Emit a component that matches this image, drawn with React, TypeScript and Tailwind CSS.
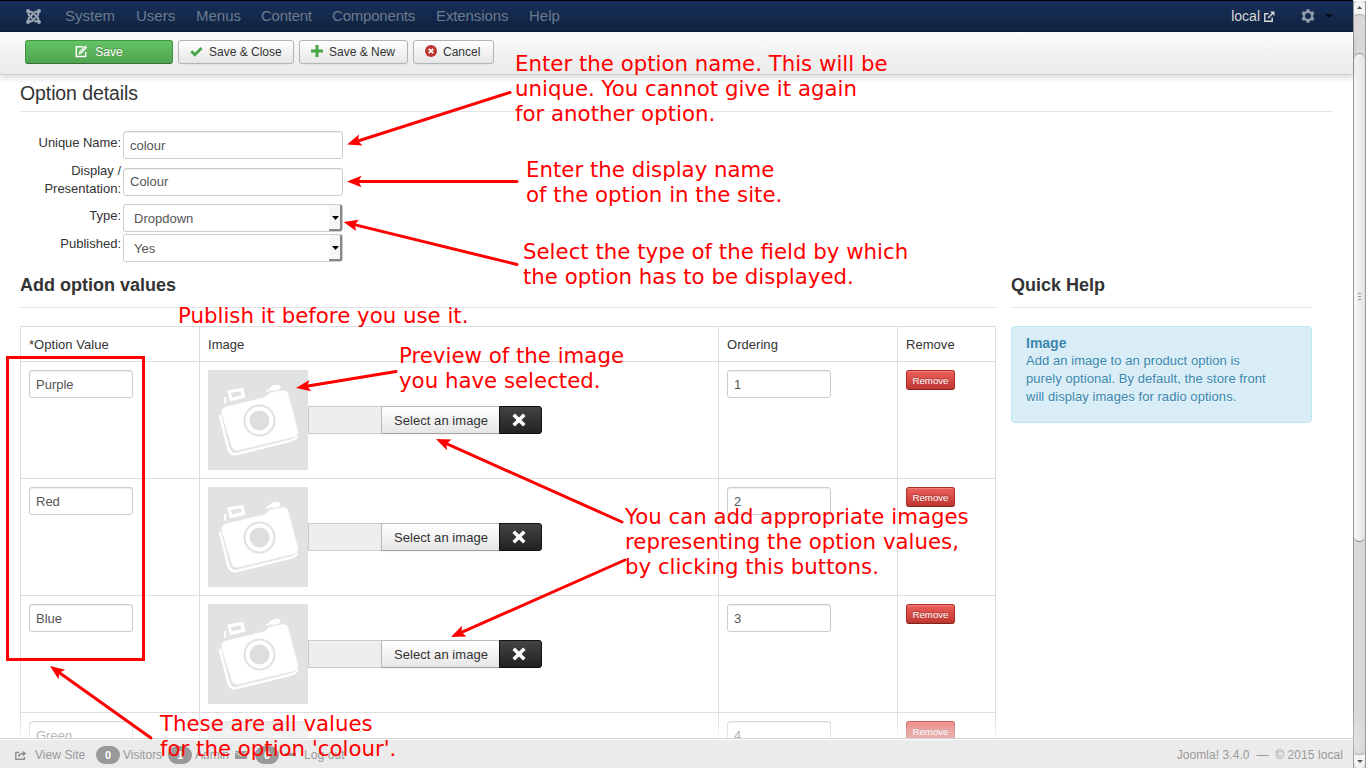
import type { ReactNode } from 'react';
import { FaJoomla } from 'react-icons/fa';

const MENU = [
  { label: 'System', className: 'w-[71px]' },
  { label: 'Users', className: 'w-[60px]' },
  { label: 'Menus', className: 'w-[65px]' },
  { label: 'Content', className: 'w-[71px] tracking-[-0.25px]' },
  { label: 'Components', className: 'w-[104px] tracking-[-0.2px]' },
  { label: 'Extensions', className: 'w-[93px] tracking-[-0.1px]' },
  { label: 'Help', className: 'w-[40px]' },
];

function EditIcon() {
  return (
    <svg className="-mt-px" width="13" height="13" viewBox="0 0 13 13" fill="none" stroke="currentColor">
      <path d="M8 1.800H1.300v9.600h9.400V7" strokeWidth="1.500" />
      <path d="M3.600 9.400l.6-3L10 .6l2.200 2-5.900 6.200z" fill="currentColor" stroke="none" />
      <path d="M4.900 7.700l5-5" stroke="#5ab85a" strokeWidth="0.700" />
    </svg>
  );
}

function CheckIcon() {
  return (
    <svg className="-mt-px" width="13" height="12" viewBox="0 0 13 12" fill="none" stroke="#46a546" strokeWidth="2.700">
      <path d="M1.300 5.200l3.500 3.600L11.600 2" />
    </svg>
  );
}

function PlusIcon() {
  return (
    <svg className="-mt-0.5" width="12" height="12" viewBox="0 0 12 12" fill="#46a546">
      <path d="M4.500 0h3v4.400H12v3H7.500V12h-3V7.400H0v-3h4.500z" />
    </svg>
  );
}

function CancelIcon() {
  return (
    <svg className="-mt-0.5" width="12" height="12" viewBox="0 0 12 12">
      <circle cx="6" cy="6" r="6" fill="#bd362f" />
      <path d="M3.800 3.800l4.400 4.400M8.200 3.800L3.800 8.200" stroke="#fff" strokeWidth="1.800" />
    </svg>
  );
}

function ExternalIcon() {
  return (
    <svg width="11" height="11" viewBox="0 0 11 11" fill="none" stroke="currentColor" strokeWidth="1.400">
      <path d="M4.500 2.700H.8v7.500h7.400V6.500" />
      <path d="M4 7l4.500-4.500" />
      <path d="M6 .5h4.500V5z" fill="currentColor" stroke="none" />
    </svg>
  );
}

function GearIcon() {
  return (
    <svg width="14" height="14" viewBox="-7 -7 14 14" fill="#8f9baa">
      <path
        fillRule="evenodd"
        d="M-1.400-6.700h2.800l.5 1.700 1.300.7 1.800-.5 1.400 2.400L5.200-1v2l1.200 1.400L5 4.800l-1.800-.5-1.300.7-.5 1.700h-2.800L-1.900 5l-1.300-.7-1.800.5-1.400-2.400L-5.200 1v-2l-1.200-1.400L-5-4.800l1.800.5 1.300-.7zM0-3a3 3 0 1 0 0 6 3 3 0 0 0 0-6z"
      />
    </svg>
  );
}

function ShareIcon() {
  return (
    <svg width="12" height="11" viewBox="0 0 12 11" fill="none" stroke="#8f8f8f" strokeWidth="1.400">
      <path d="M4 2.500H.8v6.700h8.600V7" />
      <path d="M3.600 6.800C4 4.400 5.600 3.500 8 3.500" strokeWidth="1.500" />
      <path d="M7.600.7L11.500 3.600 7.600 6.400z" fill="#8f8f8f" stroke="none" />
    </svg>
  );
}

function CameraPlaceholder() {
  return (
    <svg className="block shrink-0" width="100" height="100" viewBox="0 0 100 100">
      <rect width="100" height="100" fill="#e2e2e2" />
      <path d="M12 46l8.500 33q2 6 8 5l51-12.500q8-2 9.500-5" fill="none" stroke="#fff" strokeWidth="2.500" strokeLinecap="round" />
      <path
        d="M18 36.500l39-9.500 5-4.500 12-2.500q5-.5 6.500 4l9.500 36q1 6-5 7.500l-54 13q-6 1-8-5l-9.500-31q-1-6.500 4.500-8z"
        fill="#fff"
        stroke="#e8e8e8"
        strokeWidth="0.800"
      />
      <path
        d="M19.500 21.500q0-1 1-1.200l13.500-2.300q1.200 0 1.500 1l2 8.500-15.500 4zM23 23l1.200 4.500 9.300-2.300-1-4z"
        fill="#fff"
        fillRule="evenodd"
      />
      <path d="M17 33.500l.3-6.500" stroke="#fff" strokeWidth="2" />
      <path d="M58.500 21.500l3.500-2.500" stroke="#fff" strokeWidth="2" />
      <ellipse cx="67" cy="17.800" rx="5.700" ry="2.800" transform="rotate(-12 67 17.800)" fill="#fff" />
      <circle cx="51.500" cy="50.500" r="15" fill="#fff" stroke="#e0e0e0" strokeWidth="2" />
      <circle cx="51.500" cy="50.500" r="10" fill="#dedede" />
    </svg>
  );
}

function ToolButton({ icon, label, className }: { icon: ReactNode; label: string; className: string }) {
  return (
    <button
      className={`flex h-6 items-center gap-[6px] rounded-[3px] border border-[#b3b3b3] bg-linear-to-b from-white to-[#e6e6e6] text-[12px] leading-none text-[#333] shadow-[0_1px_2px_rgba(0,0,0,0.05)] ${className}`}
    >
      {icon}
      <span className="whitespace-nowrap">{label}</span>
    </button>
  );
}

function TextBox({ value, className }: { value: string; className: string }) {
  return (
    <input
      readOnly
      value={value}
      className={`block h-7 rounded-[3px] border border-[#ccc] bg-white px-[6px] text-[13px] text-[#555] shadow-[inset_0_1px_1px_rgba(0,0,0,0.075)] outline-none ${className}`}
    />
  );
}

function SelectBox({ value }: { value: string }) {
  return (
    <div className="flex h-7 w-[220px] rounded-[3px] border border-[#ccc] bg-white pl-[10px] text-[13px] leading-[27px] text-[#555]">
      <span className="grow">{value}</span>
      <span className="flex w-[13px] items-center justify-center rounded-br-[2px] border-r-2 border-b-2 border-[#888] bg-[#f6f6f6] pt-[2px] pl-px">
        <svg width="7" height="4" viewBox="0 0 7 4">
          <path d="M0 0h7L3.500 4z" fill="#000" />
        </svg>
      </span>
    </div>
  );
}

function ValueRow({ name, order }: { name: string; order: number }) {
  return (
    <tr className="h-[117px] align-top">
      <td className="border border-[#ddd] p-2"><TextBox value={name} className="w-[104px]" /></td>
      <td className="border border-[#ddd] p-2">
        <div className="flex items-center">
          <CameraPlaceholder />
          <div className="h-7 w-[74px] border border-[#ccc] bg-[#eee]" />
          <button className="-ml-px h-7 w-[119px] border border-[#bbb] border-b-[#a2a2a2] bg-linear-to-b from-white to-[#e6e6e6] pt-[2px] pl-px text-[13px] tracking-[0.06px] text-[#333] shadow-[0_1px_2px_rgba(0,0,0,0.05)]">
            Select an image
          </button>
          <button className="-ml-px flex h-7 w-[43px] items-center justify-center rounded-r-[3px] border border-[#111] bg-linear-to-b from-[#444] to-[#222] pr-[3px] pb-px">
            <svg width="14" height="14" viewBox="0 0 14 14" stroke="#fff" strokeWidth="3.600">
              <path d="M1.700 1.700l10.600 10.600M12.300 1.700L1.700 12.300" />
            </svg>
          </button>
        </div>
      </td>
      <td className="border border-[#ddd] p-2"><TextBox value={String(order)} className="w-[104px]" /></td>
      <td className="border border-[#ddd] p-2">
        <button className="block h-5 w-[49px] rounded-[3px] border border-[#b22c26] border-b-[#802420] bg-linear-to-b from-[#ee5f5b] to-[#bd362f] pt-px text-[9.750px] leading-[18px] tracking-[-0.05px] text-white shadow-[inset_0_1px_0_rgba(255,255,255,0.2)] [text-shadow:0_-1px_0_rgba(0,0,0,0.25)]">
          Remove
        </button>
      </td>
    </tr>
  );
}

function Badge({ children }: { children: ReactNode }) {
  return (
    <span className="flex h-[18px] w-6 items-center justify-center rounded-[9px] bg-[#999] text-[11px] font-bold text-white">
      {children}
    </span>
  );
}

const ARROWS: [number, number, number, number][] = [
  [510, 92.5, 347, 144.5],
  [517, 181.5, 347, 181.5],
  [517, 264.5, 343.5, 222],
  [396, 371.5, 296, 388],
  [622, 522, 436, 439],
  [625, 560, 451, 637],
  [151, 738, 50, 666],
];

function Arrow({ points }: { points: [number, number, number, number] }) {
  const [x1, y1, x2, y2] = points;
  const length = Math.hypot(x2 - x1, y2 - y1);
  const angle = (Math.atan2(y2 - y1, x2 - x1) * 180) / Math.PI;
  return (
    <g transform={`translate(${x2} ${y2}) rotate(${angle})`}>
      <path d={`M${-length} 0H-9`} stroke="#f00" strokeWidth="3" strokeLinecap="round" />
      <path d="M0 0L-14.500-5.800L-11.500 0L-14.500 5.800z" fill="#f00" />
    </g>
  );
}

function Note({ lines, className }: { lines: string[]; className: string }) {
  return (
    <div
      className={`absolute font-['DejaVu_Sans',sans-serif] text-[21.300px] leading-[25px] whitespace-nowrap text-[#f00] ${className}`}
    >
      {lines.map((line) => <div key={line}>{line}</div>)}
    </div>
  );
}

function Scrollbar() {
  return (
    <div className="mt-px flex w-[13px] flex-col overflow-hidden border-x border-[#999] bg-[#dad9d7]">
      <div className="flex h-[13px] items-center justify-center rounded-t-[6px] bg-[#f4f4f3]">
        <svg width="5" height="3" viewBox="0 0 5 3"><path d="M0 3h5L2.500 0z" fill="#555" /></svg>
      </div>
      <div className="h-[39px] rounded-t-[6px] border-t border-[#aaa]" />
      <div className="flex h-[489px] flex-col items-center justify-center gap-[2px] rounded-[6px] border-y border-[#888] bg-linear-to-r from-[#fafafa] to-[#e2e1df] pb-[2px]">
        <i className="h-px w-[3px] bg-[#999]" />
        <i className="h-px w-[3px] bg-[#999]" />
        <i className="h-px w-[3px] bg-[#999]" />
      </div>
      <div className="grow rounded-b-[6px] border-b border-[#aaa]" />
      <div className="flex h-[13px] items-center justify-center rounded-b-[6px] bg-[#f4f4f3]">
        <svg width="6" height="3" viewBox="0 0 6 3"><path d="M0 0h6L3 3z" fill="#555" /></svg>
      </div>
    </div>
  );
}

export default function App() {
  return (
    <div className="relative flex h-[768px] w-[1366px] overflow-hidden bg-white font-['Liberation_Sans',Arial,sans-serif] text-[13px] leading-[18px] text-[#333]">
      <div className="flex w-[1353px] flex-col">
        <nav className="relative z-20 flex h-8 shrink-0 items-center border-t border-b border-t-black border-b-[#0c192e] bg-linear-to-b from-[#17305a] to-[#10223e] pl-[25px] text-[15px] text-[#6c7a90]">
          <FaJoomla size={17} color="#9ba5b3" />
          <div className="ml-[23px] flex">
            {MENU.map((item) => <span key={item.label} className={item.className}>{item.label}</span>)}
          </div>
          <div className="mr-5 ml-auto flex items-center text-[14px] text-[#d9d9d9]">
            <span className="mr-1">local</span>
            <ExternalIcon />
            <span className="ml-[26px]"><GearIcon /></span>
            <svg className="ml-[10px]" width="8" height="4" viewBox="0 0 8 4"><path d="M0 0h8L4 4z" fill="#060d18" /></svg>
          </div>
        </nav>

        <div className="relative z-10 flex h-[43px] shrink-0 gap-[5px] border-b border-[#d0d0d0] bg-linear-to-b from-[#fafafa] to-[#ebebeb] pt-2 pl-[25px] shadow-[0_3px_6px_rgba(0,0,0,0.15)]">
          <button className="flex h-6 w-[148px] items-center justify-center gap-[7px] rounded-[3px] border border-[#409740] border-b-[#387038] bg-linear-to-b from-[#62c462] to-[#51a351] text-[12px] text-white [text-shadow:0_-1px_0_rgba(0,0,0,0.25)]">
            <EditIcon />
            Save
          </button>
          <ToolButton icon={<CheckIcon />} label="Save & Close" className="w-[116px] pl-[11px]" />
          <ToolButton icon={<PlusIcon />} label="Save & New" className="w-[109px] pl-[11px]" />
          <ToolButton icon={<CancelIcon />} label="Cancel" className="w-[81px] pl-[11px]" />
        </div>

        <main className="h-[663px] shrink-0 overflow-hidden pl-5">
          <h2 className="mr-5 h-[37px] border-b border-[#e5e5e5] text-[19.500px] leading-[36px] tracking-[-0.1px]">Option details</h2>
          <form className="mt-[19px] flex flex-col">
            <div className="flex h-[33px] gap-[2px]">
              <label className="w-[101px] pt-[3px] text-right tracking-[-0.06px]">Unique Name:</label>
              <TextBox value="colour" className="w-[220px]" />
            </div>
            <div className="flex h-10 gap-[2px]">
              <label className="-mt-[2px] w-[101px] pl-3 text-right">Display / Presentation:</label>
              <TextBox value="Colour" className="mt-1 w-[220px] pb-[2px]" />
            </div>
            <div className="flex h-[30px] gap-[2px]">
              <label className="w-[101px] pt-[3px] text-right">Type:</label>
              <SelectBox value="Dropdown" />
            </div>
            <div className="flex h-7 gap-[2px]">
              <label className="w-[101px] pt-[1px] text-right">Published:</label>
              <SelectBox value="Yes" />
            </div>
          </form>

          <div className="mt-[5px] flex items-start gap-[15px]">
            <section className="w-[976px]">
              <h3 className="h-[41px] border-b border-[#e5e5e5] text-[18px] leading-[36px] font-bold">Add option values</h3>
              <table className="mt-[18px] w-[976px] table-fixed border-collapse">
                <colgroup>
                  <col className="w-[179px]" />
                  <col className="w-[519px]" />
                  <col className="w-[179px]" />
                  <col className="w-[98px]" />
                </colgroup>
                <thead>
                  <tr className="h-[35px]">
                    {['*Option Value', 'Image', 'Ordering', 'Remove'].map((title) => (
                      <th key={title} className="border border-[#ddd] px-2 pt-[2px] text-left font-normal tracking-[0.04px]">{title}</th>
                    ))}
                  </tr>
                </thead>
                <tbody>
                  {['Purple', 'Red', 'Blue', 'Green'].map((name, index) => (
                    <ValueRow key={name} name={name} order={index + 1} />
                  ))}
                </tbody>
              </table>
            </section>
            <aside className="w-[301px]">
              <h3 className="h-[41px] border-b border-[#e5e5e5] text-[18px] leading-[36px] font-bold">Quick Help</h3>
              <div className="mt-[18px] h-[97px] rounded-[4px] border border-[#bce8f1] bg-[#d9edf7] pt-[7px] pr-9 pl-[14px] text-[#3a87ad] [text-shadow:0_1px_0_rgba(255,255,255,0.5)]">
                <h4 className="text-[14px] font-bold">Image</h4>
                <p className="tracking-[0.06px]">Add an image to an product option is purely optional. By default, the store front will display images for radio options.</p>
              </div>
            </aside>
          </div>
        </main>

        <footer className="relative flex h-[30px] shrink-0 items-center border-t border-[#d4d4d4] bg-[#ebebeb] pt-[3px] pr-[10px] pl-[15px] text-[12px] text-[#999] shadow-[inset_0_1px_0_rgba(255,255,255,0.8),0_-15px_15px_rgba(255,255,255,0.6)]">
          <ShareIcon />
          <span className="ml-2 w-[61px] tracking-[0.06px]">View Site</span>
          <Badge>0</Badge>
          <span className="ml-[3px] w-[45px]">Visitors</span>
          <Badge>1</Badge>
          <span className="ml-[3px] w-10">Admin</span>
          <svg width="12" height="8" viewBox="0 0 12 8">
            <path d="M0 0h12v8H0z" fill="#999" />
            <path d="M0 1l6 4 6-4" fill="none" stroke="#ebebeb" />
          </svg>
          <span className="ml-2"><Badge>0</Badge></span>
          <i className="ml-[6px] h-[3px] w-[11px] -translate-y-px bg-[#999]" />
          <span className="ml-2 tracking-[0.1px]">Log out</span>
          <span className="ml-auto tracking-[0.07px]">Joomla! 3.4.0&nbsp; —&nbsp; © 2015 local</span>
        </footer>
      </div>
      <Scrollbar />

      <div className="pointer-events-none absolute inset-0 z-30">
        <svg className="absolute inset-0" width="1366" height="768" viewBox="0 0 1366 768" fill="none">
          <rect x="7.500" y="357.500" width="136" height="302" stroke="#f00" strokeWidth="3" />
          {ARROWS.map((points) => <Arrow key={points.join('-')} points={points} />)}
        </svg>
        <Note className="top-[51px] left-[515px]" lines={['Enter the option name. This will be', 'unique. You cannot give it again', 'for another option.']} />
        <Note className="top-[157px] left-[526px]" lines={['Enter the display name', 'of the option in the site.']} />
        <Note className="top-[239px] left-[523px]" lines={['Select the type of the field by which', 'the option has to be displayed.']} />
        <Note className="top-[303px] left-[178px]" lines={['Publish it before you use it.']} />
        <Note className="top-[343px] left-[399px]" lines={['Preview of the image', 'you have selected.']} />
        <Note className="top-[504px] left-[625px]" lines={['You can add appropriate images', 'representing the option values,', 'by clicking this buttons.']} />
        <Note className="top-[711px] left-[160px]" lines={['These are all values', "for the option 'colour'."]} />
      </div>
    </div>
  );
}
